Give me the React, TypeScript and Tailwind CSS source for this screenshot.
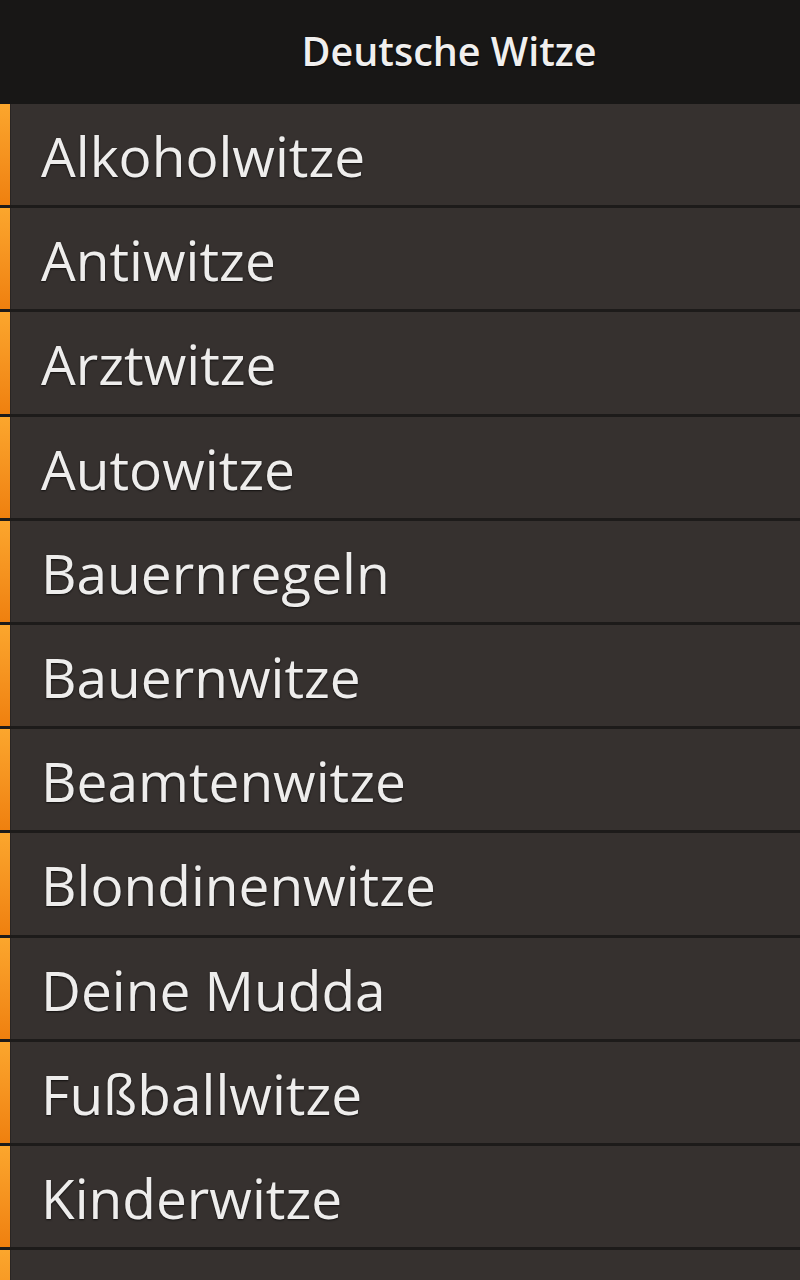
import React from "react";

const items = [
  "Alkoholwitze",
  "Antiwitze",
  "Arztwitze",
  "Autowitze",
  "Bauernregeln",
  "Bauernwitze",
  "Beamtenwitze",
  "Blondinenwitze",
  "Deine Mudda",
  "Fußballwitze",
  "Kinderwitze",
  "",
];

export default function App() {
  return (
    <div
      className="w-[800px] h-[1280px] overflow-hidden bg-[#36312f] flex flex-col"
      style={{ fontFamily: '"Open Sans", "Noto Sans", sans-serif' }}
    >
      <div className="h-[104px] shrink-0 bg-[#181716] flex items-center justify-center pl-[98px]">
        <span className="text-[39.5px] font-semibold text-[#f0efee] leading-none [text-shadow:0_1px_2px_rgba(0,0,0,0.8)]">
          Deutsche Witze
        </span>
      </div>
      {items.map((t, i) => (
        <div
          key={i}
          className="h-[104.2px] shrink-0 flex border-b-[3px] border-[#1d1b1a] bg-[#36312f]"
        >
          <div className="w-[11px] shrink-0 bg-gradient-to-b from-[#fba62d] to-[#ef800e] border-r border-[#2a2523]" />
          <div className="flex items-center pl-[30px] pt-[2px]">
            <span className="text-[55px] text-[#eeedec] leading-none [text-shadow:0_1px_2px_rgba(0,0,0,0.7)]">
              {t}
            </span>
          </div>
        </div>
      ))}
    </div>
  );
}
